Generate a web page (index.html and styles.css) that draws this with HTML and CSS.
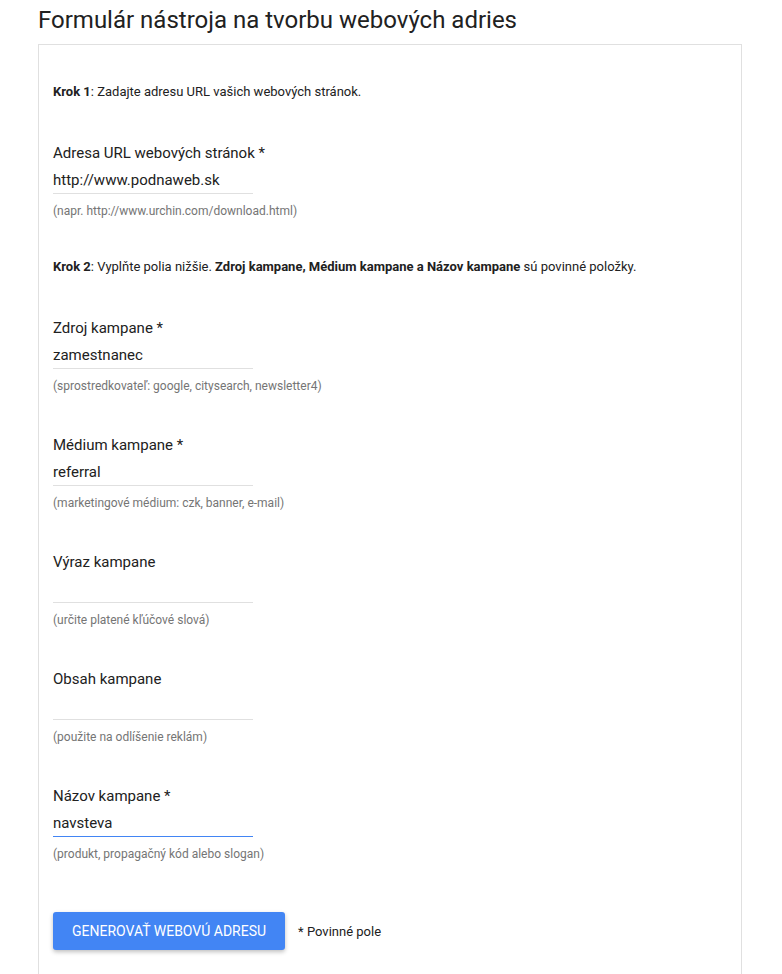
FILE: index.html
```html
<!DOCTYPE html>
<html lang="sk">
<head>
<meta charset="utf-8">
<title>Formulár nástroja na tvorbu webových adries</title>
<link rel="stylesheet" href="styles.css">
</head>
<body>
<div class="page">
  <h1 class="title">Formulár nástroja na tvorbu webových adries</h1>
  <div class="card">
    <p class="step"><b>Krok 1</b>: Zadajte adresu URL vašich webových stránok.</p>
    <div class="field">
      <label class="label">Adresa URL webových stránok *</label>
      <input class="input" type="text" value="http://www.podnaweb.sk">
      <div class="help">(napr. http://www.urchin.com/download.html)</div>
    </div>
    <p class="step step2"><b>Krok 2</b>: Vyplňte polia nižšie. <b>Zdroj kampane, Médium kampane a Názov kampane</b> sú povinné položky.</p>
    <div class="field">
      <label class="label">Zdroj kampane *</label>
      <input class="input" type="text" value="zamestnanec">
      <div class="help">(sprostredkovateľ: google, citysearch, newsletter4)</div>
    </div>
    <div class="field">
      <label class="label">Médium kampane *</label>
      <input class="input" type="text" value="referral">
      <div class="help">(marketingové médium: czk, banner, e-mail)</div>
    </div>
    <div class="field">
      <label class="label">Výraz kampane</label>
      <input class="input" type="text" value="">
      <div class="help">(určite platené kľúčové slová)</div>
    </div>
    <div class="field">
      <label class="label">Obsah kampane</label>
      <input class="input" type="text" value="">
      <div class="help">(použite na odlíšenie reklám)</div>
    </div>
    <div class="field">
      <label class="label">Názov kampane *</label>
      <input class="input input-focus" type="text" value="navsteva">
      <div class="help">(produkt, propagačný kód alebo slogan)</div>
    </div>
    <div class="actions">
      <button class="btn" type="button">Generovať webovú adresu</button>
      <span class="req">* Povinné pole</span>
    </div>
  </div>
</div>
</body>
</html>
```
FILE: styles.css
```css
html, body {
  margin: 0;
  padding: 0;
  background: #ffffff;
}
body {
  font-family: Roboto, "Liberation Sans", Arial, sans-serif;
  color: #212121;
}
.page {
  padding: 0 40px 0 38px;
}
.title {
  margin: 6px 0 10px 0;
  font-size: 24px;
  line-height: 28px;
  font-weight: 400;
  color: #212121;
}
.card {
  border: 1px solid #e0e0e0;
  border-bottom: none;
  padding: 39px 14px 24px 14px;
  min-height: 900px;
  box-sizing: border-box;
}
.step {
  margin: 0;
  font-size: 13px;
  line-height: 16px;
  color: #212121;
}
.step b {
  font-weight: 700;
}
.step2 {
  margin-top: 40px;
}
.field {
  margin-top: 43px;
  display: flex;
  flex-direction: column;
  align-items: flex-start;
}
.step2 + .field {
  margin-top: 43px;
}
.field + .field {
  margin-top: 41px;
}
.label {
  font-size: 15px;
  line-height: 20px;
  color: #212121;
}
.input {
  margin-top: 5px;
  width: 200px;
  height: 26px;
  box-sizing: border-box;
  padding: 0 0 2px 0;
  border: none;
  border-bottom: 1px solid #e0e0e0;
  font-family: Roboto, "Liberation Sans", Arial, sans-serif;
  font-size: 15px;
  color: #212121;
  background: transparent;
  outline: none;
}
.input-focus {
  border-bottom-color: #4285f4;
}
.help {
  margin-top: 10px;
  font-size: 12px;
  line-height: 15px;
  color: #757575;
}
.actions {
  margin-top: 50px;
  display: flex;
  align-items: center;
  gap: 13px;
}
.btn {
  height: 38px;
  padding: 0 19px;
  border: none;
  border-radius: 3px;
  background: #4285f4;
  color: #ffffff;
  font-family: Roboto, "Liberation Sans", Arial, sans-serif;
  font-size: 14px;
  text-transform: uppercase;
  box-shadow: 0 2px 4px rgba(0, 0, 0, 0.25);
  cursor: pointer;
}
.req {
  font-size: 13px;
  color: #212121;
}
```
